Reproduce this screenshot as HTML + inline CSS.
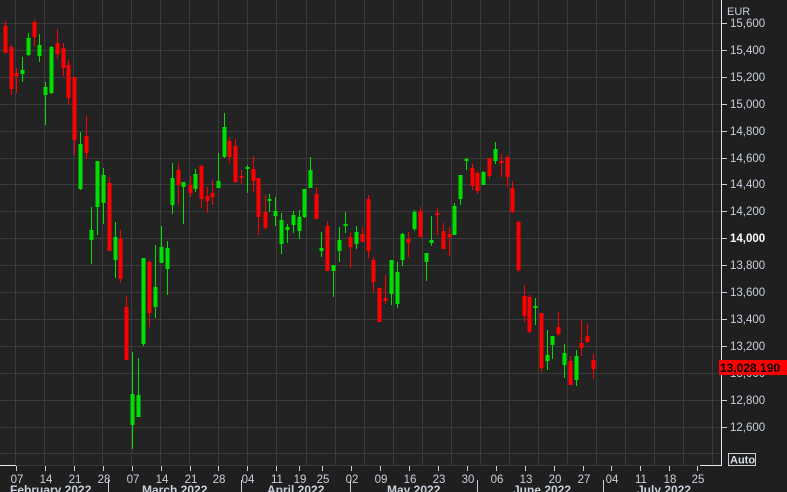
<!DOCTYPE html>
<html><head><meta charset="utf-8"><style>
html,body{margin:0;padding:0;background:#1f1f1f;}
svg{display:block;}
text{font-family:"Liberation Sans",sans-serif;}
</style></head><body>
<svg width="787" height="492" xmlns="http://www.w3.org/2000/svg">
<rect width="787" height="492" fill="#1f1f20"/>
<rect x="0" y="0" width="721" height="465" fill="#232323"/>
<g id="grid" stroke="#3b3b3b" stroke-width="1"></g>
<g id="candles"></g>
<line x1="721.5" y1="0" x2="721.5" y2="466" stroke="#e8e8e8"/>
<line x1="0" y1="465.5" x2="721" y2="465.5" stroke="#3a3a3a"/>
<line x1="0" y1="465.5" x2="16" y2="465.5" stroke="#e8e8e8"/>
<line x1="700" y1="465.5" x2="722" y2="465.5" stroke="#e8e8e8"/>
<g id="yax" fill="#c9d0dc" font-size="11.5"></g>
<text x="727" y="15" fill="#c9d0dc" font-size="11">EUR</text>
<rect x="719" y="360" width="68" height="15" fill="#ff0000"/>
<text x="720" y="372" fill="#000" font-size="12" font-weight="bold">13,028.190</text>
<rect x="728.5" y="453.5" width="27" height="12" fill="none" stroke="#c9d0dc"/>
<text x="730" y="463.5" fill="#d8dce4" font-size="11" font-weight="bold">Auto</text>
<g id="xax" fill="#c9d0dc" font-size="11.5"></g>
<g fill="#c9d0dc" font-size="12" font-weight="bold">
<text x="10" y="494">February 2022</text>
<text x="142" y="494">March 2022</text>
<text x="267" y="494">April 2022</text>
<text x="387" y="494">May 2022</text>
<text x="513" y="494">June 2022</text>
<text x="637" y="494">July 2022</text>
</g>
<g stroke="#c9d0dc">
<line x1="108.5" y1="480" x2="108.5" y2="492"/>
<line x1="241.5" y1="480" x2="241.5" y2="492"/>
<line x1="350.5" y1="480" x2="350.5" y2="492"/>
<line x1="477.5" y1="480" x2="477.5" y2="492"/>
<line x1="603.5" y1="480" x2="603.5" y2="492"/>
</g>
</svg>
<script>
var NS="http://www.w3.org/2000/svg";
function el(p,t,a,txt){var e=document.createElementNS(NS,t);for(var k in a)e.setAttribute(k,a[k]);if(txt)e.textContent=txt;p.appendChild(e);return e;}
var g=document.getElementById('grid');
for(var k=0;k<25;k++){var x=Math.round(15+29.05*k)+0.5;el(g,'line',{x1:x,y1:0,x2:x,y2:465});}
for(var k=0;k<17;k++){var y=Math.round(23+26.9*k)+0.5;el(g,'line',{x1:0,y1:y,x2:721,y2:y});}
var ya=document.getElementById('yax');
var prices=["15,600","15,400","15,200","15,000","14,800","14,600","14,400","14,200","14,000","13,800","13,600","13,400","13,200","13,000","12,800","12,600"];
for(var k=0;k<prices.length;k++){var y=Math.round(23+26.9*k);
el(ya,'line',{x1:722,y1:y+0.5,x2:727,y2:y+0.5,stroke:'#c9d0dc'});
var t=el(ya,'text',{x:730,y:y+4},prices[k]);if(prices[k]=="14,000"){t.setAttribute('font-weight','bold');t.setAttribute('fill','#ffffff');}}
var xa=document.getElementById('xax');
var days=["07","14","21","28","07","14","21","28","04","11","19","25","02","09","16","23","30","06","13","20","27","04","11","18","25"];
var xs=[17,46,75,104,133,162,191,219,248,277,300,323,352,381,410,439,468,497,526,555,584,612,641,670,698];
for(var k=0;k<days.length;k++){el(xa,'line',{x1:xs[k]-1+0.5,y1:466,x2:xs[k]-1+0.5,y2:471,stroke:'#c9d0dc'});el(xa,'text',{x:xs[k],y:483,'text-anchor':'middle'},days[k]);}
var C=[
[4.5,26,53,21,53,'r'],[10.5,47,89,45,95,'r'],[15.5,73,76,68,93,'r'],[21.5,70,74,57,82,'g'],[27.5,38,55,33,56,'g'],[33.5,22,37,20,47,'r'],[39,45,56,34,62,'g'],[44.5,87,95,82,125,'g'],[50.5,47,93,46,94,'g'],[56.5,43,54,29,59,'r'],[62.5,48,68,43,76,'r'],[68,65,98,60,105,'r'],[73.5,77,140,77,155,'r'],[79.5,144,189,132,190,'g'],[85.5,136,153,116,159,'r'],[90.5,230,240,207,264,'g'],[96.5,161,207,161,235,'g'],[102.5,175,203,168,224,'g'],[108.5,183,251,177,251,'r'],[114.5,237,260,222,278,'g'],[119.5,239,279,230,283,'r'],[125.5,307,360,296,360,'r'],[131.5,394,425,352,449,'g'],[137.5,395,417,358,417,'g'],[143,258,344,258,346,'g'],[148.5,262,313,260,327,'r'],[154.5,287,307,245,318,'g'],[160.5,247,263,226,263,'g'],[166.5,248,269,241,295,'g'],[171.5,178,205,163,214,'g'],[177.5,170,185,163,205,'r'],[183,182,187,182,224,'g'],[189.5,185,193,176,197,'r'],[195,174,189,169,192,'g'],[201,166,199,165,208,'r'],[206.5,196,201,187,213,'r'],[212,193,197,180,205,'r'],[217.5,181,188,153,188,'g'],[223.5,127,157,113,158,'g'],[229,141,157,137,163,'r'],[235,146,182,139,183,'r'],[241,176,178,170,184,'r'],[246.5,167,169,165,193,'g'],[252.5,169,181,156,192,'r'],[258,178,217,178,235,'r'],
[264.5,212,228,195,229,'r'],[269,199,201,194,212,'g'],[275,211,216,197,226,'g'],[281,220,244,213,254,'g'],[287,227,230,224,243,'g'],[293,215,225,211,233,'g'],[299,217,231,210,239,'g'],[304,189,217,189,218,'g'],[310,170,188,157,188,'g'],[316,194,219,187,219,'r'],[321,248,251,232,257,'g'],[327,226,271,221,271,'r'],[333,265,271,265,297,'g'],[339,240,251,227,262,'g'],[345,224,225,212,233,'g'],[350,237,247,232,268,'r'],[356,232,244,226,249,'g'],[362,234,242,227,242,'r'],[368,199,251,195,258,'r'],[373,260,282,257,293,'r'],[379,288,322,288,322,'r'],[385,298,301,275,304,'r'],[391,260,294,260,305,'g'],[397,272,304,262,308,'g'],[402,234,260,233,266,'g'],[408,239,243,232,257,'r'],[414,212,229,210,231,'g'],[420,211,237,207,237,'r'],[426,253,262,253,281,'g'],[431,240,243,216,246,'g'],[437,213,215,208,235,'r'],[443,231,249,223,249,'r'],[449,234,237,227,256,'r'],[454,206,235,203,235,'g'],[460,175,199,175,205,'g'],[466,159,161,158,170,'g'],[472,168,186,164,190,'r'],[477,173,191,171,194,'r'],
[483,172,185,171,185,'g'],[489,158,176,158,179,'r'],[495,149,161,142,164,'g'],[501,161,162,154,177,'r'],[507,157,177,156,187,'r'],[512,188,212,181,213,'r'],[518,222,270,221,272,'r'],[524,296,316,285,322,'r'],[529,297,332,295,333,'r'],[535,306,308,298,325,'g'],[541,313,368,313,372,'r'],[547,355,361,330,370,'g'],[552,336,345,336,359,'g'],[558,327,334,312,336,'r'],[564,353,365,344,378,'g'],[570,361,385,356,385,'r'],[576,356,380,350,386,'g'],[581,343,348,320,356,'r'],[587,336,342,324,343,'r'],[593,360,369,354,379,'r']];
var cg=document.getElementById('candles');
C.forEach(function(c){var col=c[5]=='r'?'#ff0000':'#00e000';var x=Math.round(c[0]);
el(cg,'rect',{x:x,y:c[3],width:1,height:c[4]-c[3],fill:col});
el(cg,'rect',{x:x-1.5,y:c[1],width:4,height:Math.max(2,c[2]-c[1]),fill:col});});
</script>
</body></html>
